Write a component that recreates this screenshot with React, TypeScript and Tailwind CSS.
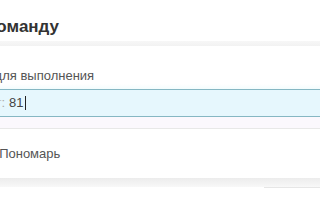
import React from 'react'

const font = { fontFamily: '"Liberation Sans", Arial, sans-serif' }

function App() {
  return (
    <div className="w-[320px] h-[200px] bg-white overflow-hidden" style={font}>
      {/* Header */}
      <div className="h-[41px] pt-[17px] whitespace-nowrap">
        <h2 className="text-[17px] leading-[20px] font-bold text-[#333] -ml-[102px]">Выберите команду</h2>
      </div>
      <div className="h-[5px] bg-gradient-to-b from-[#f7f7f7] to-[#f2f2f2]" />

      {/* Body */}
      <div className="pt-[22px] whitespace-nowrap">
        <div className="text-[13px] leading-[16px] text-[#555] -ml-[62px]">Команда для выполнения</div>
        <div className="h-[5px] bg-gradient-to-b from-white to-[#f3fcfd]" />
        <div className="h-[28px] border-y border-[#86b7c3] bg-[#e6f7fd] flex items-center text-[13px] text-[#444]">
          <span className="-ml-[28px] text-[#bbb]">Порт</span>
          <span className="text-[#aaa]">:</span>
          <span className="ml-[4px]">81</span>
          <span className="ml-[1px] w-[1px] h-[14px] bg-[#222]" />
        </div>
        <div className="h-[11px] bg-[#fbf8fd]" />
      </div>

      {/* List */}
      <div className="border-t border-[#e8e8e8] h-[50px] flex items-center whitespace-nowrap">
        <span className="text-[13px] text-[#555] -ml-[35px]">Иван Пономарь</span>
      </div>
      <div className="h-[9px] bg-gradient-to-b from-[#ececec] to-[#f8f8f8]" />
      <div className="flex justify-end">
        <div className="w-[56px] h-[1px] bg-[#e6e6e6]" />
      </div>
    </div>
  )
}

export default App
